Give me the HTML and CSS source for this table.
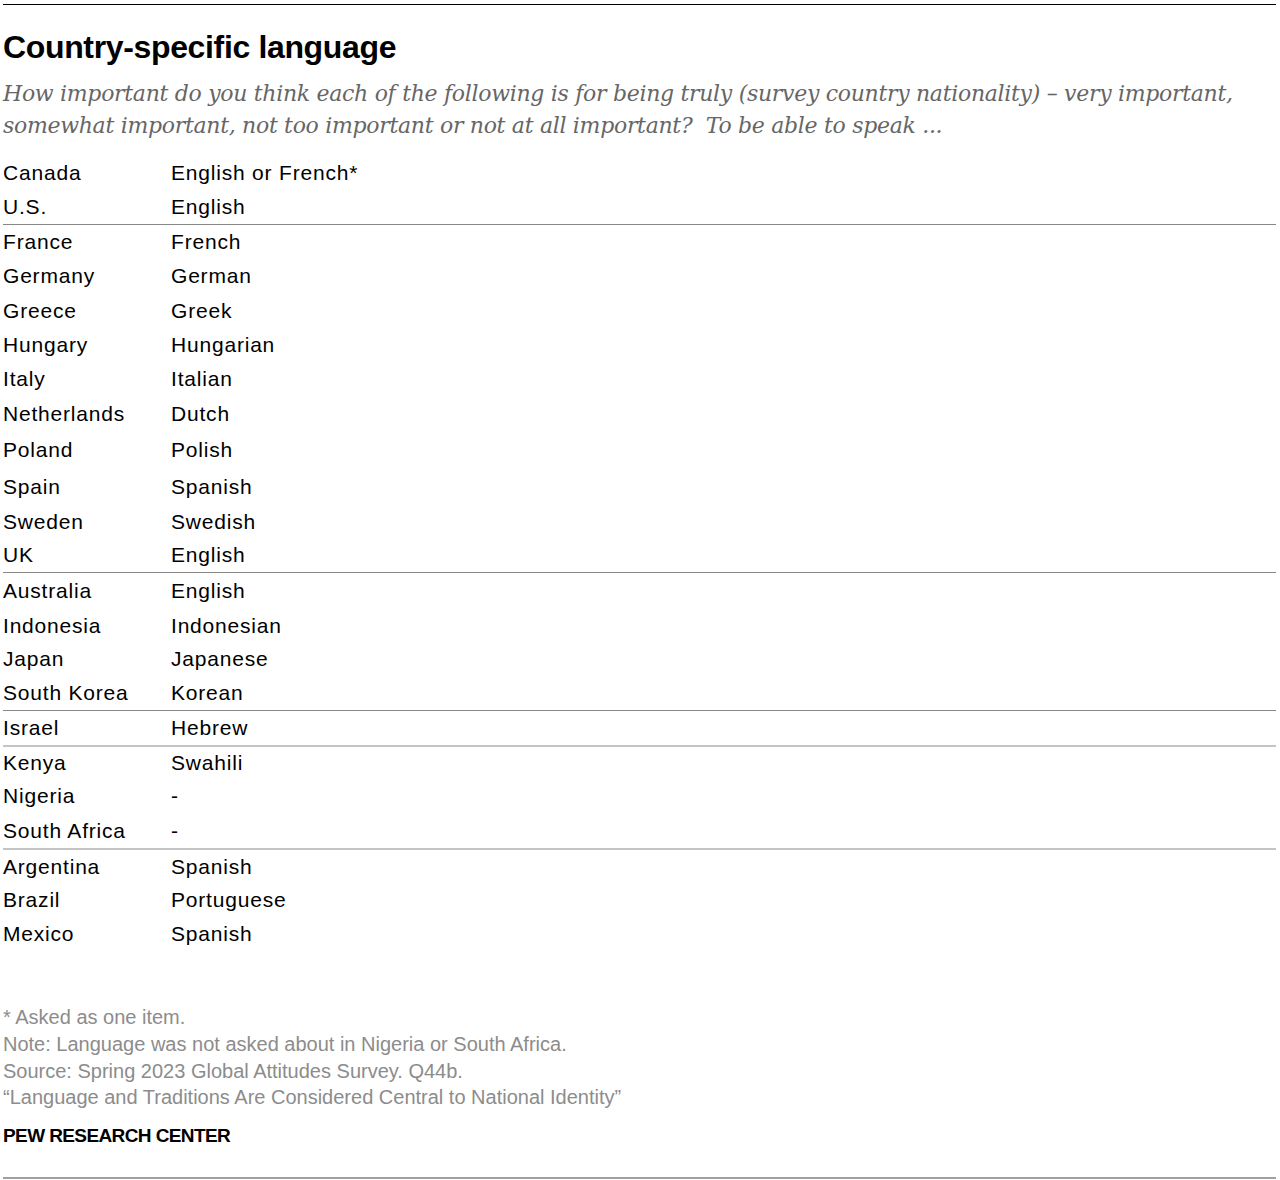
FILE: index.html
```html
<!DOCTYPE html>
<html>
<head>
<meta charset="utf-8">
<link rel="stylesheet" href="styles.css">
</head>
<body>
<div class="chart">
  <h1 class="title">Country-specific language</h1>
  <p class="subtitle">How important do you think each of the following is for being truly (survey country nationality) – very important, somewhat important, not too important or not at all important?&nbsp; To be able to speak ...</p>
  <div class="table">
    <div class="group">
      <div class="row"><span class="c1">Canada</span><span class="c2">English or French*</span></div>
      <div class="row"><span class="c1">U.S.</span><span class="c2">English</span></div>
    </div>
    <div class="group dark">
      <div class="row"><span class="c1">France</span><span class="c2">French</span></div>
      <div class="row"><span class="c1">Germany</span><span class="c2">German</span></div>
      <div class="row h35"><span class="c1">Greece</span><span class="c2">Greek</span></div>
      <div class="row"><span class="c1">Hungary</span><span class="c2">Hungarian</span></div>
      <div class="row"><span class="c1">Italy</span><span class="c2">Italian</span></div>
      <div class="row h36"><span class="c1">Netherlands</span><span class="c2">Dutch</span></div>
      <div class="row h36"><span class="c1">Poland</span><span class="c2">Polish</span></div>
      <div class="row h37"><span class="c1">Spain</span><span class="c2">Spanish</span></div>
      <div class="row h33"><span class="c1">Sweden</span><span class="c2">Swedish</span></div>
      <div class="row"><span class="c1">UK</span><span class="c2">English</span></div>
    </div>
    <div class="group dark">
      <div class="row h36"><span class="c1">Australia</span><span class="c2">English</span></div>
      <div class="row h33"><span class="c1">Indonesia</span><span class="c2">Indonesian</span></div>
      <div class="row"><span class="c1">Japan</span><span class="c2">Japanese</span></div>
      <div class="row"><span class="c1">South Korea</span><span class="c2">Korean</span></div>
    </div>
    <div class="group dark">
      <div class="row"><span class="c1">Israel</span><span class="c2">Hebrew</span></div>
    </div>
    <div class="group light">
      <div class="row h32"><span class="c1">Kenya</span><span class="c2">Swahili</span></div>
      <div class="row"><span class="c1">Nigeria</span><span class="c2">-</span></div>
      <div class="row h35"><span class="c1">South Africa</span><span class="c2">-</span></div>
    </div>
    <div class="group light">
      <div class="row h33"><span class="c1">Argentina</span><span class="c2">Spanish</span></div>
      <div class="row"><span class="c1">Brazil</span><span class="c2">Portuguese</span></div>
      <div class="row"><span class="c1">Mexico</span><span class="c2">Spanish</span></div>
    </div>
  </div>
  <div class="notes">
    <p>* Asked as one item.</p>
    <p>Note: Language was not asked about in Nigeria or South Africa.</p>
    <p>Source: Spring 2023 Global Attitudes Survey. Q44b.</p>
    <p>“Language and Traditions Are Considered Central to National Identity”</p>
  </div>
  <p class="credit">PEW RESEARCH CENTER</p>
</div>
</body>
</html>
```
FILE: styles.css
```css
html, body {
  margin: 0;
  padding: 0;
  background: #ffffff;
}
body {
  padding: 4px 4px 0 3px;
}
.chart {
  display: flex;
  flex-direction: column;
  border-top: 1px solid #000000;
  border-bottom: 2px solid #a0a0a0;
  height: 1175px;
  box-sizing: border-box;
  font-family: "Liberation Sans", Arial, sans-serif;
  color: #000000;
}
.title {
  margin: 0;
  padding-top: 24px;
  font-family: "Liberation Sans", Arial, sans-serif;
  font-weight: bold;
  font-size: 32px;
  line-height: 36px;
  letter-spacing: -0.35px;
}
.subtitle {
  margin: 13px 0 0 0;
  font-family: "DejaVu Serif", Georgia, serif;
  font-style: italic;
  font-size: 22px;
  line-height: 32px;
  color: #666666;
  letter-spacing: -0.3px;
}
.table {
  margin-top: 14px;
}
.group + .group.dark {
  border-top: 1px solid #888888;
}
.group + .group.light {
  border-top: 2px solid #c4c4c4;
}
.row {
  display: flex;
  height: 34px;
  align-items: center;
  font-size: 21px;
  letter-spacing: 0.8px;
}
.row.h32 { height: 32px; }
.row.h33 { height: 33px; }
.row.h35 { height: 35px; }
.row.h36 { height: 36px; }
.row.h37 { height: 37px; }
.c1 {
  width: 168px;
  flex: none;
}
.c2 {
  flex: 1;
}
.notes {
  margin-top: auto;
  color: #8c8c8c;
  font-size: 20px;
  line-height: 26.7px;
  letter-spacing: 0;
}
.notes p {
  margin: 0;
}
.credit {
  margin: 13px 0 29px 0;
  font-weight: bold;
  font-size: 19px;
  line-height: 24px;
  letter-spacing: -0.6px;
}
```
